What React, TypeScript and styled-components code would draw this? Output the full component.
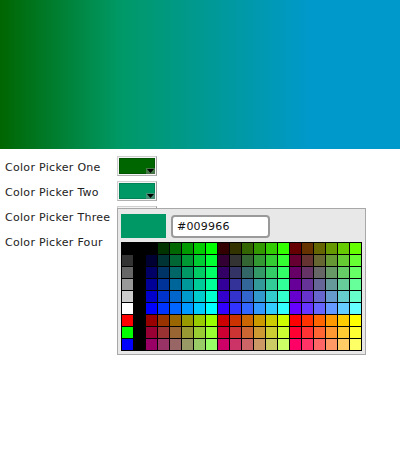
import React from "react";
import styled, { createGlobalStyle } from "styled-components";

const Global = createGlobalStyle`
  html, body { margin: 0; padding: 0; background: #fff; }
  html, body, #root { min-height: 460px; }
  body { font-family: "DejaVu Sans", Verdana, sans-serif; font-size: 11px; color: #222; }
`;

const Page = styled.div`
  position: relative;
  min-height: 460px;
`;

const Banner = styled.div`
  height: 149px;
  width: 100%;
  background: linear-gradient(to right, #006600 0%, #009966 30%, #0099cc 78%, #0099cc 100%);
`;

const Form = styled.div`
  display: flex;
  flex-direction: column;
  gap: 5px;
  padding: 7px 0 0 5px;
`;

const Row = styled.div`
  position: relative;
  display: flex;
  align-items: center;
  height: 20px;
`;

const Label = styled.span`
  width: 112px;
  font-size: 11px;
  letter-spacing: 0.3px;
  color: #222;
  padding-top: 2px;
`;

const Swatch = styled.div<{ $color: string }>`
  position: relative;
  box-sizing: border-box;
  width: 40px;
  height: 20px;
  border: 1px solid #cfcfcf;
  border-right-color: #a0a0a0;
  border-bottom-color: #b0b0b0;
  padding: 1px;
  background: #f4f4f4;
  &::before {
    content: "";
    display: block;
    width: 100%;
    height: 100%;
    background: ${(p) => p.$color};
    box-shadow: inset 0 0 0 1px rgba(0, 0, 0, 0.15);
  }
`;

const Arrow = styled.svg`
  position: absolute;
  right: 1px;
  bottom: 1px;
`;

const Popup = styled.div`
  position: absolute;
  left: 112px;
  top: 2px;
  z-index: 2;
  box-sizing: border-box;
  width: 249px;
  border: 1px solid #a8a8a8;
  background: #e8e8e8;
  padding: 5px 3px 3px 3px;
  display: flex;
  flex-direction: column;
  gap: 4px;
`;

const Header = styled.div`
  display: flex;
  align-items: center;
  gap: 5px;
  height: 24px;
  flex: none;
`;

const Preview = styled.div<{ $color: string }>`
  width: 45px;
  height: 24px;
  background: ${(p) => p.$color};
`;

const HexInput = styled.div`
  box-sizing: border-box;
  width: 99px;
  height: 23px;
  margin-top: 1px;
  border: 2px solid #9a9a9a;
  border-radius: 4px;
  background: #fff;
  font-size: 11px;
  color: #111;
  display: flex;
  align-items: center;
  padding-left: 4px;
  letter-spacing: 0.2px;
`;

const Palette = styled.div`
  flex: none;
  display: grid;
  grid-template-columns: repeat(20, 11px);
  grid-template-rows: repeat(9, 11px);
  gap: 1px;
  padding: 1px;
  background: #000;
  width: 241px;
  height: 109px;
  box-sizing: border-box;
`;

const Cell = styled.div<{ $color: string }>`
  background: ${(p) => p.$color};
`;

const levels = ["00", "33", "66", "99", "cc", "ff"];
const firstCol = ["000000", "333333", "666666", "999999", "cccccc", "ffffff", "ff0000", "00ff00", "0000ff"];

function buildPalette(): string[] {
  const out: string[] = [];
  for (let r = 0; r < 9; r++) {
    out.push("#" + firstCol[r]);
    out.push("#000000");
    const upper = r < 6;
    const blue = upper ? levels[r] : levels[r - 6];
    for (let b = 0; b < 3; b++) {
      const red = upper ? levels[b] : levels[b + 3];
      for (let g = 0; g < 6; g++) {
        out.push("#" + red + levels[g] + blue);
      }
    }
  }
  return out;
}

const palette = buildPalette();

const DropArrow = () => (
  <Arrow width="9" height="6" viewBox="0 0 9 6">
    <rect x="0" y="0" width="9" height="6" fill="#8a8a8a" opacity="0.5" />
    <polygon points="1,1 8,1 4.5,5" fill="#000" />
  </Arrow>
);

const Picker = ({ color }: { color: string }) => (
  <Swatch $color={color}>
    <DropArrow />
  </Swatch>
);

export default function App() {
  return (
    <Page>
      <Global />
      <Banner />
      <Form>
        <Row>
          <Label>Color Picker One</Label>
          <Picker color="#006600" />
        </Row>
        <Row>
          <Label>Color Picker Two</Label>
          <Picker color="#009966" />
        </Row>
        <Row>
          <Label>Color Picker Three</Label>
          <Picker color="#009966" />
          <Popup>
            <Header>
              <Preview $color="#009966" />
              <HexInput>#009966</HexInput>
            </Header>
            <Palette>
              {palette.map((c, i) => (
                <Cell key={i} $color={c} />
              ))}
            </Palette>
          </Popup>
        </Row>
        <Row>
          <Label>Color Picker Four</Label>
          <Picker color="#0099cc" />
        </Row>
      </Form>
    </Page>
  );
}
